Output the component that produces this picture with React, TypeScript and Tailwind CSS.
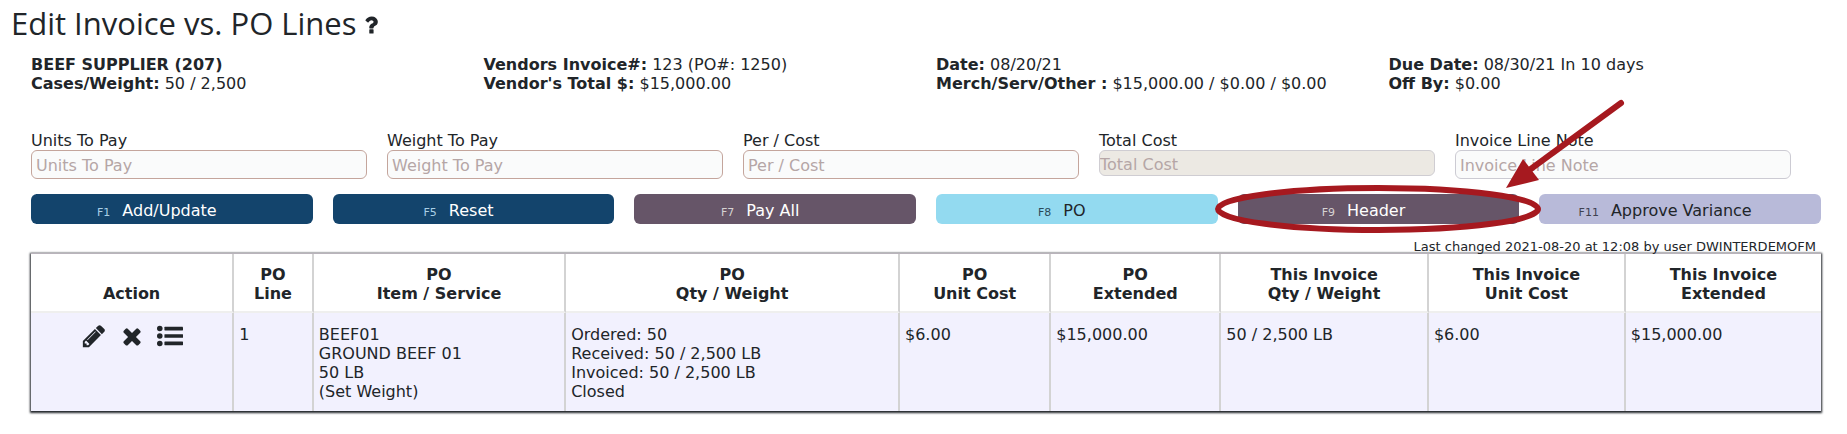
import type { ReactNode } from 'react'

interface Field {
    id: string
    label: string
    className: string
    disabled?: boolean
}

interface Action {
    hotkey: string
    label: string
    className: string
    keyClassName: string
    marked?: boolean
}

const fields: Field[] = [
    { id: 'units', label: 'Units To Pay', className: 'h-[29px] border-[#c4a59c] bg-[#fafbfb] px-1 pt-0.5' },
    { id: 'weight', label: 'Weight To Pay', className: 'h-[29px] border-[#c4a59c] bg-[#fafbfb] px-1 pt-0.5' },
    { id: 'cost', label: 'Per / Cost', className: 'h-[29px] border-[#c4a59c] bg-[#fafbfb] px-1 pt-0.5' },
    { id: 'total', label: 'Total Cost', className: 'h-[26px] border-[#cfcdd2] bg-[#ece9e3] pt-0.5', disabled: true },
    { id: 'note', label: 'Invoice Line Note', className: 'h-[29px] border-[#cccbd3] bg-[#fafbfb] px-1 pt-0.5' },
]

const actions: Action[] = [
    { hotkey: 'F1', label: 'Add/Update', className: 'bg-[#13446c] text-white', keyClassName: 'text-[#a9cfe6]' },
    { hotkey: 'F5', label: 'Reset', className: 'bg-[#13446c] text-white', keyClassName: 'text-[#a9cfe6]' },
    { hotkey: 'F7', label: 'Pay All', className: 'bg-[#665568] text-white', keyClassName: 'text-[#d5d2d2]' },
    { hotkey: 'F8', label: 'PO', className: 'bg-[#93daf0] text-[#212529]', keyClassName: 'text-[#2c4a58]' },
    { hotkey: 'F9', label: 'Header', className: 'bg-[#665568] text-white', keyClassName: 'text-[#d5d2d2]', marked: true },
    { hotkey: 'F11', label: 'Approve Variance', className: 'bg-[#b8bad9] text-[#212529]', keyClassName: 'text-[#3f4150]' },
]

const columns = [
    { lines: ['', 'Action'], width: 'w-[11.35%]' },
    { lines: ['PO', 'Line'], width: 'w-[4.45%]' },
    { lines: ['PO', 'Item / Service'], width: 'w-[14.1%]' },
    { lines: ['PO', 'Qty / Weight'], width: 'w-[18.65%]' },
    { lines: ['PO', 'Unit Cost'], width: 'w-[8.45%]' },
    { lines: ['PO', 'Extended'], width: 'w-[9.5%]' },
    { lines: ['This Invoice', 'Qty / Weight'], width: 'w-[11.6%]' },
    { lines: ['This Invoice', 'Unit Cost'], width: 'w-[11%]' },
    { lines: ['This Invoice', 'Extended'], width: 'w-[10.9%]' },
]

const cells = [
    ['1'],
    ['BEEF01', 'GROUND BEEF 01', '50 LB', '(Set Weight)'],
    ['Ordered: 50', 'Received: 50 / 2,500 LB', 'Invoiced: 50 / 2,500 LB', 'Closed'],
    ['$6.00'],
    ['$15,000.00'],
    ['50 / 2,500 LB'],
    ['$6.00'],
    ['$15,000.00'],
]

function Icon({ size, children }: { size: string; children: ReactNode }) {
    return (
        <svg viewBox="0 0 1792 1792" className={size} fill="currentColor" aria-hidden="true">
            {children}
        </svg>
    )
}

function QuestionIcon() {
    return (
        <Icon size="size-6">
            <path d="M1088 1256v240q0 16-12 28t-28 12h-240q-16 0-28-12t-12-28v-240q0-16 12-28t28-12h240q16 0 28 12t12 28zm316-600q0 54-15.5 101t-35 76.5-55 59.5-57.5 43.5-61 35.5q-41 23-68.5 65t-27.5 67q0 17-12 32.5t-28 15.5h-240q-15 0-25.5-18.5t-10.5-37.5v-45q0-83 65-156.5t143-108.5q59-27 84-56t25-76q0-42-46.5-74t-107.5-32q-65 0-108 29-35 25-107 115-13 16-31 16-12 0-25-8l-164-125q-13-10-15.5-25t5.5-28q160-266 464-266 80 0 161 31t146 83 106 127.5 41 158.5z" />
        </Icon>
    )
}

function PencilIcon() {
    return (
        <Icon size="size-[26px]">
            <path d="M491 1536l91-91-235-235-91 91v107h128v128h107zm523-928q0-22-22-22-10 0-17 7l-542 542q-7 7-7 17 0 22 22 22 10 0 17-7l542-542q7-7 7-17zm-54-192l416 416-832 832h-416v-416zm683 96q0 53-37 90l-166 166-416-416 166-165q36-38 90-38 53 0 91 38l235 234q37 39 37 91z" />
        </Icon>
    )
}

function RemoveIcon() {
    return (
        <Icon size="size-[26px]">
            <path d="M1490 1322q0 40-28 68l-136 136q-28 28-68 28t-68-28l-294-294-294 294q-28 28-68 28t-68-28l-136-136q-28-28-28-68t28-68l294-294-294-294q-28-28-28-68t28-68l136-136q28-28 68-28t68 28l294 294 294-294q28-28 68-28t68 28l136 136q28 28 28 68t-28 68l-294 294 294 294q28 28 28 68z" />
        </Icon>
    )
}

function ListIcon() {
    return (
        <Icon size="size-[26px]">
            <circle cx="192" cy="384" r="192" />
            <circle cx="192" cy="896" r="192" />
            <circle cx="192" cy="1408" r="192" />
            <rect x="512" y="256" width="1280" height="256" rx="32" />
            <rect x="512" y="768" width="1280" height="256" rx="32" />
            <rect x="512" y="1280" width="1280" height="256" rx="32" />
        </Icon>
    )
}

// Red ring and arrow drawn over the marked button
function Callout() {
    return (
        <svg
            viewBox="-250 -110 500 220"
            className="pointer-events-none absolute top-1/2 left-1/2 z-10 h-[220px] w-[500px] max-w-none -translate-x-1/2 -translate-y-1/2"
            aria-hidden="true"
        >
            <ellipse cx="0" cy="0" rx="160" ry="21" fill="none" stroke="#a6191f" strokeWidth="6" />
            <path d="M243 -106L150 -38" stroke="#a6191f" strokeWidth="6" strokeLinecap="round" />
            <path d="M128 -21L145 -50L161 -29Z" fill="#a6191f" />
        </svg>
    )
}

function Info({ label, children }: { label: string; children?: ReactNode }) {
    return (
        <p>
            <strong>{label}</strong> {children}
        </p>
    )
}

export default function App() {
    return (
        <main className="bg-white pb-5 font-['DejaVu_Sans',Verdana,sans-serif] text-base/[19px] text-[#212529]">
            <h1 className="flex items-center gap-0.5 pt-[3px] pl-[11px] font-['Open_Sans','Noto_Sans',sans-serif] text-[31px]/10 font-normal">
                Edit Invoice vs. PO Lines
                <button type="button" aria-label="Help" className="pt-1">
                    <QuestionIcon />
                </button>
            </h1>

            <section className="mt-3 ml-[31px] grid grid-cols-4 pr-1.5">
                <div>
                    <Info label="BEEF SUPPLIER (207)" />
                    <Info label="Cases/Weight:">50 / 2,500</Info>
                </div>
                <div>
                    <Info label="Vendors Invoice#:">123 (PO#: 1250)</Info>
                    <Info label="Vendor's Total $:">$15,000.00</Info>
                </div>
                <div>
                    <Info label="Date:">08/20/21</Info>
                    <Info label="Merch/Serv/Other :">$15,000.00 / $0.00 / $0.00</Info>
                </div>
                <div>
                    <Info label="Due Date:">08/30/21 In 10 days</Info>
                    <Info label="Off By:">$0.00</Info>
                </div>
            </section>

            <section className="mr-14 ml-[31px] mt-[38px] grid grid-cols-5 items-start gap-5">
                {fields.map((field) => (
                    <div key={field.id} className="flex flex-col">
                        <label htmlFor={field.id}>{field.label}</label>
                        <input
                            id={field.id}
                            type="text"
                            placeholder={field.label}
                            disabled={field.disabled}
                            className={`w-full rounded-md border placeholder:text-[#b5a6a6] ${field.className}`}
                        />
                    </div>
                ))}
            </section>

            <section className="mr-[26px] ml-[31px] mt-[15px] grid grid-cols-6 gap-5">
                {actions.map((action) => (
                    <div key={action.hotkey} className="relative flex">
                        <button
                            type="button"
                            className={`flex h-[30px] flex-1 items-baseline justify-center gap-3 rounded-md pt-[7px] pr-[30px] ${action.className}`}
                        >
                            <span className={`text-[11px] ${action.keyClassName}`}>{action.hotkey}</span>
                            <span>{action.label}</span>
                        </button>
                        {action.marked && <Callout />}
                    </div>
                ))}
            </section>

            <section className="mr-[26px] ml-[31px] mt-4">
                <p className="pr-[5px] text-right text-[13px]/[13px]">Last changed 2021-08-20 at 12:08 by user DWINTERDEMOFM</p>
                <table className="w-full table-fixed border-separate border-spacing-0 border-t border-[#b9b3bb] shadow-[0_1px_2px_1px_#212529]">
                    <thead>
                        <tr className="bg-white">
                            {columns.map((column, i) => (
                                <th
                                    key={i}
                                    scope="col"
                                    className={`border-r-2 border-b-2 border-r-[#d3d3d3] border-b-[#efefee] pt-[11px] pb-2 align-bottom font-bold last:border-r-0 ${column.width}`}
                                >
                                    {column.lines[0]}
                                    {column.lines[0] && <br />}
                                    {column.lines[1]}
                                </th>
                            ))}
                        </tr>
                    </thead>
                    <tbody>
                        <tr className="bg-[#f2f1fe] align-top">
                            <td className="border-r-2 border-[#d3d3d3] pt-2.5">
                                <div className="flex justify-center gap-3">
                                    <button type="button" aria-label="Edit line">
                                        <PencilIcon />
                                    </button>
                                    <button type="button" aria-label="Remove line">
                                        <RemoveIcon />
                                    </button>
                                    <button type="button" aria-label="Line details">
                                        <ListIcon />
                                    </button>
                                </div>
                            </td>
                            {cells.map((lines, i) => (
                                <td key={i} className="border-r-2 border-[#d3d3d3] px-[5px] pt-3 pb-2.5 last:border-r-0">
                                    {lines.map((line) => (
                                        <div key={line}>{line}</div>
                                    ))}
                                </td>
                            ))}
                        </tr>
                    </tbody>
                </table>
            </section>
        </main>
    )
}
